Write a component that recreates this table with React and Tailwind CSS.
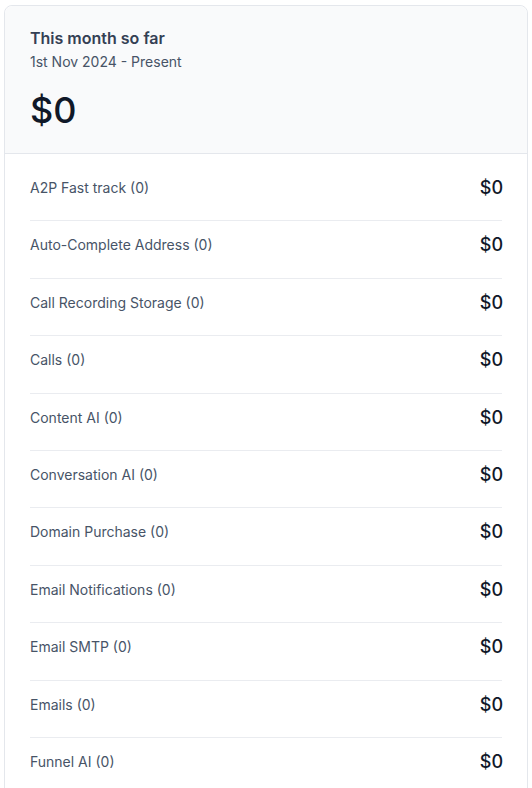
import React from "react";

const items = [
  "A2P Fast track (0)",
  "Auto-Complete Address (0)",
  "Call Recording Storage (0)",
  "Calls (0)",
  "Content AI (0)",
  "Conversation AI (0)",
  "Domain Purchase (0)",
  "Email Notifications (0)",
  "Email SMTP (0)",
  "Emails (0)",
  "Funnel AI (0)",
];

const App = () => {
  return (
    <div className="w-[532px] h-[788px] overflow-hidden bg-white pt-[5px] px-[4px] font-['Inter',sans-serif]">
      <div className="w-[524px] border border-[#e4e7ec] rounded-lg bg-white">
        <div className="bg-[#f9fafb] rounded-t-lg border-b border-[#e4e7ec] px-[25px] pt-[20px] pb-[23px]">
          <h2 className="text-base leading-6 font-semibold text-[#344054]">This month so far</h2>
          <p className="mt-[2px] text-sm leading-5 text-[#475467]">1st Nov 2024 - Present</p>
          <p className="mt-[18px] text-[36px] leading-10 font-medium text-[#101828]">$0</p>
        </div>
        <div className="px-[25px] pt-[10px] pb-4">
          {items.map((label) => (
            <div
              key={label}
              className="h-[57.4px] flex justify-between items-start pt-[14px] border-b border-[#eaecf0] last:border-b-0"
            >
              <span className="text-sm leading-5 text-[#475467]">{label}</span>
              <span className="text-lg leading-5 font-medium text-[#101828] -mr-[1px]">$0</span>
            </div>
          ))}
        </div>
      </div>
    </div>
  );
};

export default App;
